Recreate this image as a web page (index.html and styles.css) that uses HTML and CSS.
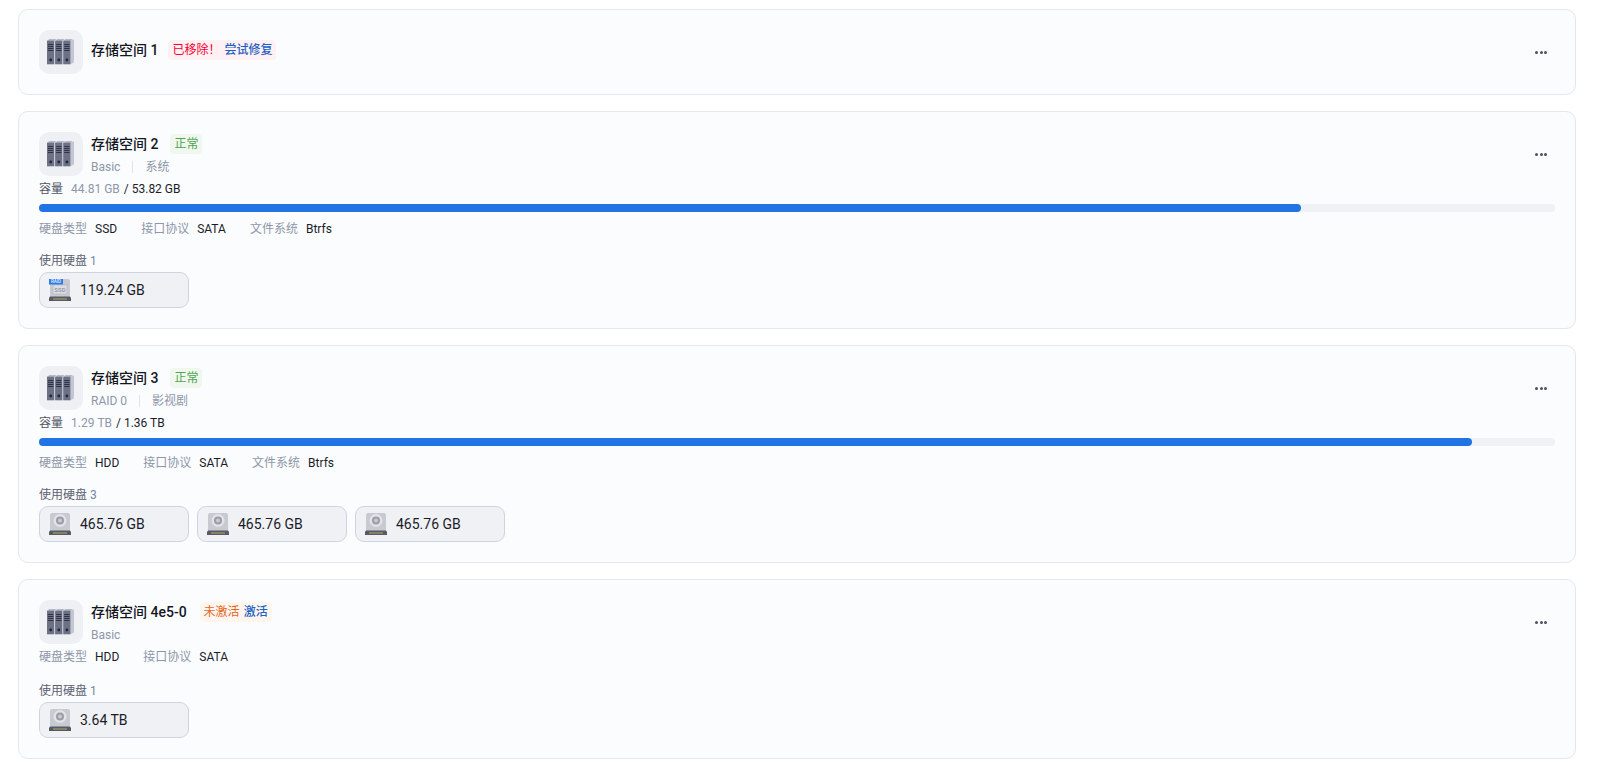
FILE: index.html
```html
<!DOCTYPE html>
<html lang="zh-CN">
<head>
  <meta charset="UTF-8" />
  <meta name="viewport" content="width=device-width, initial-scale=1.0"/>
  <title>存储空间</title>
  <link rel="stylesheet" href="styles.css">
</head>
<body>
  <svg class="sprites" width="0" height="0" aria-hidden="true">
    <symbol id="binder" viewBox="0 0 44 44">
      <path d="M31.500 10.700l3.500-1.500v23.300l-3.500 1.800z" fill="#c3c6d1"/>
      <g id="binder-unit">
        <path d="M8 10.700l2.200-1.400h7.300l-2.200 1.400z" fill="#a5a9b8"/>
        <rect x="8" y="10.700" width="7.300" height="23.600" fill="#6c7186"/>
        <path d="M9 14h5.300v1h-5.300zM9 16h5.300v1h-5.300zM9 18h5.300v1h-5.300zM9 20h5.300v1h-5.300z" fill="#2f3345"/>
        <circle cx="11.700" cy="30" r="1.400" fill="#23263a"/>
      </g>
      <use href="#binder-unit" x="8.100"/>
      <use href="#binder-unit" x="16.200"/>
    </symbol>
    <symbol id="hdd" viewBox="0 0 22 22">
      <path d="M1 2q0-2 2-2h16q2 0 2 2v16H1z" fill="#c8cad2"/>
      <circle cx="11" cy="7.500" r="6.500" fill="#e2e3e8"/>
      <circle cx="11" cy="7.500" r="4" fill="#9a9ca6"/>
      <circle cx="11" cy="7.500" r="2" fill="#c9cbd2"/>
      <path d="M0 19l1-1.500h20l1 1.500v3H0z" fill="#565a66"/>
      <path d="M4 19.500h14v1H4z" fill="#b9a65e"/>
    </symbol>
  </svg>

  <section class="pool">
    <header class="pool-head">
      <div class="pool-icon"><svg width="44" height="44"><use href="#binder"/></svg></div>
      <div class="pool-info">
        <div class="pool-title">
          <span class="pool-name">存储空间 1</span>
          <span class="badge badge-red">已移除！<a class="badge-link">尝试修复</a></span>
        </div>
      </div>
      <div class="more"><i></i><i></i><i></i></div>
    </header>
  </section>

  <section class="pool">
    <header class="pool-head">
      <div class="pool-icon"><svg width="44" height="44"><use href="#binder"/></svg></div>
      <div class="pool-info">
        <div class="pool-title">
          <span class="pool-name">存储空间 2</span>
          <span class="badge badge-green">正常</span>
        </div>
        <div class="pool-sub"><span>Basic</span><span class="sep"></span><span>系统</span></div>
      </div>
      <div class="more"><i></i><i></i><i></i></div>
    </header>
    <div class="capacity">容量<span class="used">44.81 GB</span><span class="total">/ 53.82 GB</span></div>
    <div class="bar"><div class="bar-fill" style="width: 83.25%"></div></div>
    <div class="meta">
      <span class="meta-item">硬盘类型<b>SSD</b></span>
      <span class="meta-item">接口协议<b>SATA</b></span>
      <span class="meta-item">文件系统<b>Btrfs</b></span>
    </div>
    <div class="disks-label">使用硬盘 <span>1</span></div>
    <div class="disks">
      <div class="disk">
        <svg class="disk-icon" width="22" height="22" viewBox="0 0 22 22">
          <path d="M1 2q0-2 2-2h16q2 0 2 2v16H1z" fill="#c8cad2"/>
          <rect x="4" y="6" width="14" height="9" fill="#dcdee4" stroke="#aeb1ba" stroke-width=".6"/>
          <text x="11" y="12.800" class="ssd-text">SSD</text>
          <path d="M0 19l1-1.500h20l1 1.500v3H0z" fill="#565a66"/>
          <path d="M4 19.500h14v1H4z" fill="#b9a65e"/>
          <rect x="0" y="0" width="14" height="5.500" fill="#2f7be6"/>
          <text x="7" y="4.300" class="tag-text">RAID</text>
        </svg>
        119.24 GB
      </div>
    </div>
  </section>

  <section class="pool">
    <header class="pool-head">
      <div class="pool-icon"><svg width="44" height="44"><use href="#binder"/></svg></div>
      <div class="pool-info">
        <div class="pool-title">
          <span class="pool-name">存储空间 3</span>
          <span class="badge badge-green">正常</span>
        </div>
        <div class="pool-sub"><span>RAID 0</span><span class="sep"></span><span>影视剧</span></div>
      </div>
      <div class="more"><i></i><i></i><i></i></div>
    </header>
    <div class="capacity">容量<span class="used">1.29 TB</span><span class="total">/ 1.36 TB</span></div>
    <div class="bar"><div class="bar-fill" style="width: 94.5%"></div></div>
    <div class="meta">
      <span class="meta-item">硬盘类型<b>HDD</b></span>
      <span class="meta-item">接口协议<b>SATA</b></span>
      <span class="meta-item">文件系统<b>Btrfs</b></span>
    </div>
    <div class="disks-label">使用硬盘 <span>3</span></div>
    <div class="disks">
      <div class="disk"><svg class="disk-icon" width="22" height="22"><use href="#hdd"/></svg>465.76 GB</div>
      <div class="disk"><svg class="disk-icon" width="22" height="22"><use href="#hdd"/></svg>465.76 GB</div>
      <div class="disk"><svg class="disk-icon" width="22" height="22"><use href="#hdd"/></svg>465.76 GB</div>
    </div>
  </section>

  <section class="pool">
    <header class="pool-head">
      <div class="pool-icon"><svg width="44" height="44"><use href="#binder"/></svg></div>
      <div class="pool-info">
        <div class="pool-title">
          <span class="pool-name">存储空间 4e5-0</span>
          <span class="badge badge-orange">未激活<a class="badge-link">激活</a></span>
        </div>
        <div class="pool-sub"><span>Basic</span></div>
      </div>
      <div class="more"><i></i><i></i><i></i></div>
    </header>
    <div class="meta meta-flush">
      <span class="meta-item">硬盘类型<b>HDD</b></span>
      <span class="meta-item">接口协议<b>SATA</b></span>
    </div>
    <div class="disks-label">使用硬盘 <span>1</span></div>
    <div class="disks">
      <div class="disk"><svg class="disk-icon" width="22" height="22"><use href="#hdd"/></svg>3.64 TB</div>
    </div>
  </section>
</body>
</html>
```

FILE: styles.css
```css
body {
  font-family: Roboto, "Noto Sans CJK SC", sans-serif;
  font-size: 12px;
  color: #1a1d28;
  background: #ffffff;
  margin: 0;
  padding: 9px 26px 0 18px;
}
.sprites {
  position: absolute;
}
.pool {
  background: #fbfcfe;
  border: 1px solid #e3e7ee;
  border-radius: 10px;
  padding: 20px;
  margin-bottom: 16px;
}
.pool-head {
  display: flex;
  align-items: center;
  height: 44px;
}
.pool-icon {
  width: 44px;
  height: 44px;
  flex: none;
  background: #eff0f4;
  border-radius: 10px;
  margin-right: 8px;
}
.pool-info {
  flex: 1;
}
.pool-title {
  display: flex;
  align-items: center;
  height: 20px;
  line-height: 20px;
  margin-bottom: 4px;
}
.pool-name {
  font-size: 14px;
  font-weight: 500;
  color: #14161f;
  margin-right: 12px;
}
.pool-sub {
  display: flex;
  align-items: center;
  height: 18px;
  line-height: 18px;
  margin-bottom: -2px;
  color: #8e97a8;
}
.sep {
  width: 1px;
  height: 12px;
  background: #e0e3ea;
  margin: 0 12px;
}
.badge {
  display: inline-block;
  height: 20px;
  line-height: 20px;
  padding: 0 4px;
  border-radius: 4px;
}
.badge-green {
  color: #4fa64f;
  background: #eff7ef;
}
.badge-red {
  color: #f5002d;
  background: #fff1f3;
  margin-left: -2px;
}
.badge-orange {
  color: #e4671b;
  background: #fff5ef;
  margin-left: 1px;
}
.badge-link {
  color: #1c62c4;
  font-weight: 500;
  margin-left: 4px;
}
.more {
  display: flex;
  gap: 1.500px;
  padding: 8px;
}
.more i {
  width: 3px;
  height: 3px;
  border-radius: 50%;
  background: #4a5060;
}
.capacity {
  height: 16px;
  line-height: 16px;
  margin-top: 5px;
  color: #4f5564;
}
.used {
  color: #8e97a8;
  margin: 0 4px 0 8px;
}
.total {
  color: #1a1d28;
  font-weight: 450;
}
.bar {
  height: 8px;
  background: #f0f1f4;
  border-radius: 4px;
  margin-top: 7px;
}
.bar-fill {
  height: 100%;
  background: #2074e4;
  border-radius: 4px;
}
.meta {
  display: flex;
  gap: 24px;
  height: 20px;
  line-height: 20px;
  margin-top: 7px;
  color: #8e97a8;
}
.meta-flush {
  margin-top: 3px;
  margin-bottom: 16px;
}
.meta b {
  color: #1a1d28;
  font-weight: 450;
  margin-left: 8px;
}
.disks-label {
  height: 16px;
  line-height: 16px;
  margin-top: 14px;
  color: #5b6272;
}
.disks-label span {
  color: #7487a0;
}
.disks {
  display: flex;
  gap: 8px;
  margin-top: 3px;
}
.disk {
  display: flex;
  align-items: center;
  box-sizing: border-box;
  width: 150px;
  height: 36px;
  padding-left: 9px;
  background: #f0f1f5;
  border: 1px solid #cfd5e0;
  border-radius: 9px;
  font-size: 14px;
  font-weight: 450;
}
.disk-icon {
  flex: none;
  margin-right: 9px;
}
.ssd-text {
  font-size: 6px;
  font-weight: 700;
  fill: #9a9da8;
  text-anchor: middle;
}
.tag-text {
  font-size: 4.500px;
  font-weight: 500;
  fill: #e8f0ff;
  text-anchor: middle;
}
```
